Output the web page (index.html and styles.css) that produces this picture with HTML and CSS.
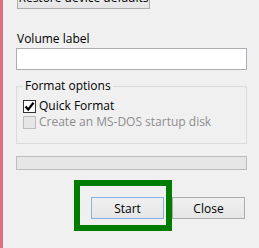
FILE: index.html
```html
<!DOCTYPE html>
<html lang="en">
<head>
    <meta charset="UTF-8">
    <title>Format</title>
    <link rel="stylesheet" href="styles.css">
</head>
<body>

<div class="dialog">
    <button type="button" class="win-btn restore-btn">Restore device defaults</button>

    <label class="field-label" for="volumeLabel">Volume label</label>
    <input type="text" id="volumeLabel" class="text-input">

    <fieldset class="group">
        <legend>Format options</legend>
        <label class="check-row">
            <span class="check-box checked">
                <svg width="11" height="11" viewBox="0 0 11 11"><path d="M1.5 5.5 L4.2 8.5 L9.5 1.8" fill="none" stroke="#000" stroke-width="2.2"/></svg>
            </span>
            Quick Format
        </label>
        <label class="check-row disabled">
            <span class="check-box"></span>
            Create an MS-DOS startup disk
        </label>
    </fieldset>

    <div class="progress"></div>

    <div class="actions">
        <div class="highlight"></div>
        <button type="button" class="win-btn default-btn">Start</button>
        <button type="button" class="win-btn">Close</button>
    </div>
</div>

</body>
</html>
```

FILE: styles.css
```css
body {
    margin: 0;
    background-color: #f0f0f0;
    font-family: "Open Sans", "Noto Sans", sans-serif;
    font-size: 12px;
    color: #000;
}
.dialog {
    width: 253px;
    height: 248px;
    background: #f0f0f0;
    border-left: 3px solid #d9707f;
    border-right: 1px solid #b07a88;
    padding: 0 0 0 13px;
    box-sizing: content-box;
    display: flex;
    flex-direction: column;
    align-items: flex-start;
    overflow: hidden;
}
.win-btn {
    font-family: inherit;
    font-size: 12px;
    height: 22px;
    width: 73px;
    padding: 0;
    border: 1px solid #acacac;
    background: linear-gradient(#f0f0f0, #e5e5e5);
    color: #000;
    box-sizing: border-box;
}
.restore-btn {
    width: 133px;
    height: 23px;
    margin-top: -14px;
    margin-left: 1px;
}
.field-label {
    display: block;
    margin-top: 22px;
    margin-left: 1px;
    line-height: 16px;
}
.text-input {
    width: 231px;
    height: 22px;
    margin-top: 1px;
    border: 1px solid #abadb3;
    background: white;
    box-sizing: border-box;
}
.group {
    width: 231px;
    height: 66px;
    margin: 8px 0 0 0;
    padding: 4px 0 0 6px;
    border: 1px solid #dcdcdc;
    box-sizing: border-box;
}
.group legend {
    padding: 0 2px;
    margin-left: 0;
    line-height: 16px;
}
.check-row {
    display: flex;
    align-items: center;
    gap: 3px;
    height: 16px;
    line-height: 16px;
}
.check-box {
    width: 13px;
    height: 13px;
    border: 1px solid #333;
    background: white;
    box-sizing: border-box;
    display: flex;
    align-items: center;
    justify-content: center;
}
.check-row.disabled {
    color: #8d8d8d;
}
.check-row.disabled .check-box {
    border-color: #bcbcbc;
    background: #e6e6e6;
}
.progress {
    width: 231px;
    height: 14px;
    margin-top: 12px;
    border: 1px solid #bcbcbc;
    background: #e6e6e6;
    box-sizing: border-box;
}
.actions {
    position: relative;
    width: 231px;
    display: flex;
    justify-content: flex-end;
    gap: 8px;
    margin-top: 27px;
    padding-right: 2px;
    box-sizing: border-box;
}
.default-btn {
    border-color: #7eb4ea;
}
.highlight {
    position: absolute;
    left: 58px;
    top: -17px;
    width: 98px;
    height: 51px;
    border: 6px solid #007c00;
    box-sizing: border-box;
}
```
